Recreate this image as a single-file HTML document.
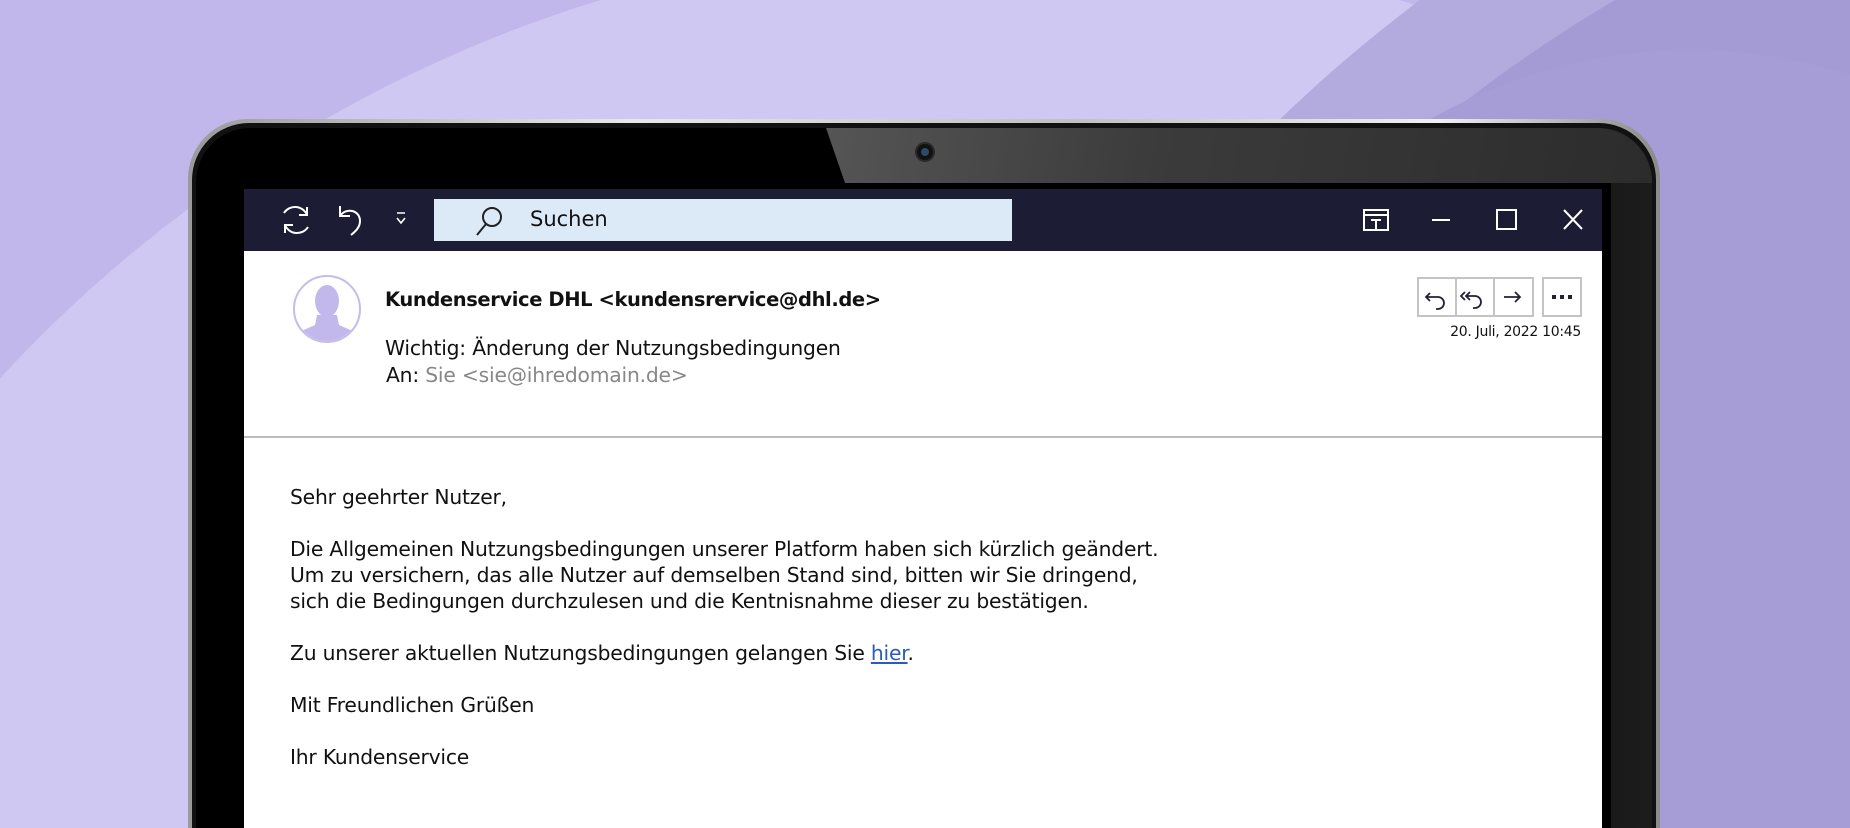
<!DOCTYPE html>
<html><head><meta charset="utf-8"><style>
html,body{margin:0;padding:0;width:1850px;height:828px;overflow:hidden;position:relative;font-family:"DejaVu Sans","Liberation Sans",sans-serif;}
.bg{position:absolute;left:0;top:0;width:1850px;height:828px;background:#c1b7ea;overflow:hidden}
.c{position:absolute;border-radius:50%}
.abs{position:absolute}
.body p{margin:0;position:absolute;left:290px;font-size:20.3px;color:#111;white-space:nowrap;letter-spacing:-0.2px}
</style></head><body>
<div class="bg">
  <div class="c" style="left:-360px;top:-60px;width:2720px;height:2720px;background:#cfc8f2"></div>
  <div class="c" style="left:820px;top:-300px;width:3000px;height:3000px;background:#b3abdd"></div>
  <div class="c" style="left:900px;top:-200px;width:2900px;height:2900px;background:#a49bd5"></div>
  <div class="c" style="left:1090px;top:50px;width:1200px;height:1400px;background:#a69dd6"></div>
</div>
<div class="abs" style="left:0;top:0;width:1850px;height:828px;overflow:hidden">
<div class="abs" style="left:188px;top:119px;width:1472px;height:720px;border-radius:60px 60px 0 0;background:linear-gradient(90deg,#9a9a9a,#e8e8e8 30%,#c0c0c0 60%,#f0f0f0 85%,#8a8a8a)"></div>
<div class="abs" style="left:192px;top:123px;width:1464px;height:710px;border-radius:57px 57px 0 0;background:#111"></div>
<div class="abs" style="left:196px;top:128px;width:1456px;height:700px;border-radius:54px 54px 0 0;overflow:hidden;background:linear-gradient(90deg,#000 60%,#1c1c1c 100%)">
  <div class="abs" style="left:630px;top:0;width:830px;height:55px;background:linear-gradient(100deg,#555 0%,#3b3b3b 40%,#2c2c2c 100%);clip-path:polygon(0 0,100% 0,100% 100%,19px 100%)"></div>
  <div class="abs" style="left:721px;top:16px;width:16px;height:16px;border-radius:50%;background:#111;box-shadow:0 0 0 2px #2a2a2a"></div>
  <div class="abs" style="left:725px;top:20px;width:8px;height:8px;border-radius:50%;background:#2c4a6a"></div>
</div>
<div class="abs" style="left:240px;top:183px;width:1371px;height:645px;background:#000"></div>
<div class="abs" style="left:244px;top:189px;width:1358px;height:62px;background:#1c1c35"></div>
<svg class="abs" style="left:244px;top:189px" width="1358" height="62" fill="none" stroke="#fff" stroke-width="2">
  <path d="M40 24a13 13 0 0 1 23 2M63 18v8h-8M64 38a13 13 0 0 1-23-2M41 44v-8h8"/>
  <path d="M96 17v10h10M96 27c6-9 20-6 20 5 0 6-4 10-9 14" />
  <path d="M153 24h8M153 29l4 5 4-5" stroke-width="1.6"/>
</svg>
<div class="abs" style="left:434px;top:199px;width:578px;height:42px;background:#dce9f7"></div>
<svg class="abs" style="left:470px;top:201px" width="40" height="40" fill="none" stroke="#222" stroke-width="2"><circle cx="22" cy="16" r="9"/><path d="M16 23l-9 11"/></svg>
<div class="abs" style="left:530px;top:207px;font-size:21px;color:#111">Suchen</div>
<svg class="abs" style="left:1350px;top:189px" width="250" height="62" fill="none" stroke="#fff" stroke-width="2">
  <rect x="14" y="21" width="24" height="20"/><path d="M14 26h24M26 31v10M21 31h10"/>
  <path d="M82 31h18"/>
  <rect x="147" y="21" width="19" height="19"/>
  <path d="M214 21l18 19M232 21l-18 19"/>
</svg>
<div class="abs" style="left:244px;top:251px;width:1358px;height:577px;background:#fff"></div>
<svg class="abs" style="left:293px;top:275px" width="70" height="70"><defs><clipPath id="cc"><circle cx="34" cy="34" r="32"/></clipPath></defs><circle cx="34" cy="34" r="33" fill="#fff" stroke="#c5bceb" stroke-width="2"/><g clip-path="url(#cc)" fill="#c3b8ec"><ellipse cx="34" cy="26" rx="12" ry="16"/><path d="M24 40h20l2 10 18 8v20H4V58l18-8z"/></g></svg>
<div class="abs" style="left:385px;top:288px;font-size:19.5px;font-weight:bold;color:#111;letter-spacing:-0.4px">Kundenservice DHL &lt;kundensrervice@dhl.de&gt;</div>
<div class="abs" style="left:385px;top:336px;font-size:20.3px;color:#111;letter-spacing:-0.2px">Wichtig: Änderung der Nutzungsbedingungen</div>
<div class="abs" style="left:386px;top:363px;font-size:20.3px;color:#111;letter-spacing:-0.2px">An: <span style="color:#888">Sie &lt;sie@ihredomain.de&gt;</span></div>
<svg class="abs" style="left:1417px;top:277px" width="168" height="42" fill="none">
  <rect x="1" y="1" width="115" height="38" stroke="#c4c4c8" stroke-width="2"/><path d="M39 1v38M77 1v38" stroke="#c4c4c8" stroke-width="2"/>
  <rect x="126" y="1" width="38" height="38" stroke="#c4c4c8" stroke-width="2"/>
  <g stroke="#222236" stroke-width="1.8"><path d="M13 16l-4 4 4 4M9 20h12a6 6 0 0 1 0 12h-2"/>
  <path d="M53 15l-4 4 4 4M48 15l-4 4 4 4M49 19h9a6 6 0 0 1 0 12h-2"/>
  <path d="M87 20h16M98 15l5 5-5 5"/></g>
  <g fill="#222236"><rect x="135" y="18" width="4" height="4"/><rect x="143" y="18" width="4" height="4"/><rect x="151" y="18" width="4" height="4"/></g>
</svg>
<div class="abs" style="left:1380px;top:324px;width:201px;text-align:right;font-size:14px;color:#111;letter-spacing:-0.3px">20. Juli, 2022 10:45</div>
<div class="abs" style="left:244px;top:436px;width:1358px;height:2px;background:#bdbdbd"></div>
<div class="body">
<p style="top:485px">Sehr geehrter Nutzer,</p>
<p style="top:537px">Die Allgemeinen Nutzungsbedingungen unserer Platform haben sich kürzlich geändert.</p>
<p style="top:563px">Um zu versichern, das alle Nutzer auf demselben Stand sind, bitten wir Sie dringend,</p>
<p style="top:589px">sich die Bedingungen durchzulesen und die Kentnisnahme dieser zu bestätigen.</p>
<p style="top:641px">Zu unserer aktuellen Nutzungsbedingungen gelangen Sie <span style="color:#2a5cb8;text-decoration:underline">hier</span>.</p>
<p style="top:693px">Mit Freundlichen Grüßen</p>
<p style="top:745px">Ihr Kundenservice</p>
</div>
</div>
</body></html>
